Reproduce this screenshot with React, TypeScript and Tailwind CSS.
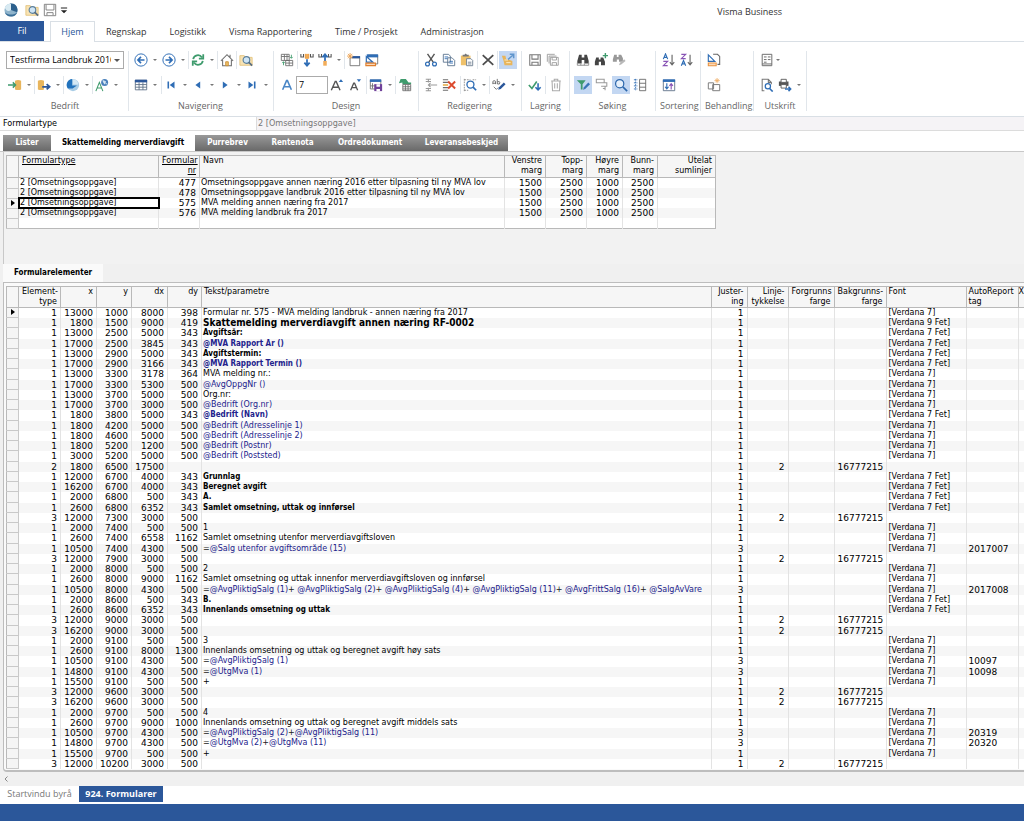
import type { ReactNode } from "react";
import clsx from "clsx";

const BLUE = "#2f6db5";
const NAVY = "#2b579a";
const GRAY = "#6e6e6e";
const GREEN = "#3f9b6d";
const TAN = "#e8b55c";

const icons: Record<string, ReactNode> = {
  logo: (
    <>
      <circle cx="8" cy="8" r="7.500" fill="#8fb4cc" />
      <path d="M7 .5a7.500 7.500 0 0 1 8 10L8 8z" fill="#2b5f8c" />
      <path d="M1 5c2-4 5-4.400 7-4v7c-3 2-6 1-7-3z" fill="#d8eaf2" />
      <path d="M1 10.500c3 3.500 11 3.500 14 0-1 6-12 7-14 0z" fill="#3b6f98" />
    </>
  ),
  folderSearch: (
    <>
      <path d="M1 3h5l1 2h8v9H1z" fill="#f8e3b4" stroke="#e3c27c" />
      <circle cx="8.500" cy="8" r="3.800" fill="#cfe5f5" stroke="#5a7f9c" strokeWidth="1.300" />
      <path d="M11 10.500l4 4" stroke="#5a6f82" strokeWidth="2" />
    </>
  ),
  save: (
    <path d="M2 2h12v12H2zM4.500 2v5h7V2M4.500 14v-3.500h7V14" fill="none" stroke="#777" strokeWidth="1.200" />
  ),
  disk: <path d="M1.500 1.500h13v13h-13zM3.500 2v6h9V2M4.500 14v-3h7v3" fill="none" stroke="#777" />,
  saveAll: (
    <path d="M5 5h9v9H5zM7 5v3h5V5M7 14v-3h5v3M3.500 12V3.500H12M1.500 10V1.500H10" fill="none" stroke="#999" />
  ),
  customize: <path d="M3 4h10v1.500H3zM3 8.500h10L8 13z" fill="#222" />,
  dbIn: (
    <>
      <path d="M8 3q3.500-1.500 7 0v10q-3.500 1.500-7 0z" fill={TAN} />
      <path d="M0 8h8M5.500 5l3 3-3 3" fill="none" stroke={GREEN} strokeWidth="1.800" />
    </>
  ),
  dbOut: (
    <>
      <path d="M1 3q3.500-1.500 7 0v10q-3.500 1.500-7 0z" fill={TAN} />
      <path d="M6 10h8M11 7l3.500 3-3.500 3" fill="none" stroke={NAVY} strokeWidth="2" />
    </>
  ),
  pie: (
    <>
      <circle cx="8" cy="8" r="7" fill="#a9cde6" />
      <path d="M7 1a7 7 0 0 0-5 11h5.500l5-3.500H7z" fill="#2273bd" />
      <path d="M8 1.500a6 6 0 0 1 6 6H8z" fill="#d4e8f4" />
    </>
  ),
  fontGlobe: (
    <>
      <path d="M1 15L5 5l4 10M2.500 11.500h5" fill="none" stroke={GREEN} strokeWidth="1.200" />
      <circle cx="11" cy="5" r="4" fill="#4a80bb" />
      <path d="M9 3l3 1-1 3zM12 6l2 1" fill="#d9e8f4" stroke="#d9e8f4" />
    </>
  ),
  back: (
    <>
      <circle cx="8" cy="8" r="7" fill="none" stroke={BLUE} strokeWidth="1.100" />
      <path d="M12 8H5M8 4.500L4.500 8 8 11.500" fill="none" stroke={BLUE} strokeWidth="1.900" />
    </>
  ),
  forward: (
    <>
      <circle cx="8" cy="8" r="7" fill="none" stroke={BLUE} strokeWidth="1.100" />
      <path d="M4 8h7M8 4.500L11.500 8 8 11.500" fill="none" stroke={BLUE} strokeWidth="1.900" />
    </>
  ),
  refresh: (
    <path
      d="M2.500 7a5.500 5.500 0 0 1 10-2M14 1.500v5H9M13.500 9a5.500 5.500 0 0 1-10 2M2 14.500v-5h5"
      fill="none"
      stroke={GREEN}
      strokeWidth="2"
    />
  ),
  home: (
    <>
      <path d="M3 8v6.500h10V8M1 9l7-7 7 7M11.500 5V2" fill="none" stroke={GRAY} strokeWidth="1.200" />
      <path d="M6.500 10h3v4.500h-3z" fill="#efc16a" stroke="#c88d34" />
    </>
  ),
  table: (
    <>
      <path d="M1.500 2.500h13v11h-13zM1.500 7.500h13M1.500 10.500h13M5.800 5v8.500M10.200 5v8.500" fill="none" stroke="#5c6f86" />
      <path d="M1 2h14v3H1z" fill={NAVY} />
    </>
  ),
  first: <path d="M4 4v8h1.800V4zM12 4v8L6.500 8z" fill={BLUE} />,
  prev: <path d="M10.500 4v8L5 8z" fill={BLUE} />,
  next: <path d="M5.500 4v8L11 8z" fill={BLUE} />,
  last: <path d="M10.200 4v8H12V4zM4 4v8l5.500-4z" fill={BLUE} />,
  gridSwap: (
    <>
      <path d="M1.500 1.500h9v7h-9zM1.500 4h9M5 1.500v7M8 1.500v7M6.500 8.500h8v6h-8zM6.500 11.500h8M10.500 8.500v6" fill="none" stroke={GRAY} />
      <path d="M13 2v4M11.500 4.500L13 6l1.500-1.500M4 14v-4M2.500 11.500L4 10l1.500 1.500" fill="none" stroke={GREEN} />
    </>
  ),
  moveDown: (
    <>
      <path d="M1 1v3.500h3V1M12 1v3.500h3V1" fill="none" stroke="#555" strokeWidth="1.200" />
      <path d="M6 1v5h4V1" fill="#f2ad59" stroke="#e79535" />
      <path d="M8 7v7M5 11l3 3.500 3-3.500" fill="none" stroke={BLUE} strokeWidth="2" />
    </>
  ),
  moveUp: (
    <>
      <path d="M1 1v3.500h3V1M12 1v3.500h3V1" fill="none" stroke="#555" strokeWidth="1.200" />
      <path d="M8 9V2M5 5l3-3.500L11 5" fill="none" stroke={BLUE} strokeWidth="2" />
      <path d="M6 9h4v5.500H6z" fill="#f2ad59" />
    </>
  ),
  newWindow: (
    <>
      <path d="M3.500 5.500h11v9h-11z" fill="none" stroke={GRAY} />
      <path d="M6 3.500h9V6H6z" fill={NAVY} />
      <path d="M3.500 0v7M0 3.500h7M1 1l5 5M6 1L1 6" stroke="#eda251" />
    </>
  ),
  designWindow: (
    <>
      <path d="M3.500 2.500h11v10h-11z" fill="none" stroke={GRAY} />
      <path d="M2 1.500h13V5H2z" fill={BLUE} />
      <path d="M1.500 4v6.500H9z" fill="#fff" stroke={BLUE} strokeWidth="1.400" />
      <path d="M1 11.500h11v3H1z" fill="#fbd9b8" stroke="#e07f2e" strokeWidth="1.300" />
    </>
  ),
  letter: <path d="M3 13.500L7.500 3h1L13 13.500M4.500 10h7" fill="none" stroke="#4a86c6" strokeWidth="1.800" />,
  grow: (
    <>
      <path d="M1.500 14L6 4h1l4.500 10M3.500 10.500h6" fill="none" stroke="#555" strokeWidth="1.600" />
      <path d="M10 4.500l2.500-3 2.500 3z" fill={BLUE} />
    </>
  ),
  shrink: (
    <>
      <path d="M3 14l3.500-8h1L11 14M4.500 11h5" fill="none" stroke="#555" strokeWidth="1.500" />
      <path d="M10 1.500h5l-2.500 3z" fill={BLUE} />
    </>
  ),
  saveTable: (
    <>
      <path d="M1.500 2.500h12v10h-12zM4 6v6M1.500 9h8" fill="none" stroke={GRAY} />
      <path d="M1 1.500h13V4.500H1z" fill={BLUE} />
      <path d="M6 7h9v8H6z" fill="#70429a" />
      <path d="M8.500 7h4v3h-4zM8.500 12.500h4V15h-4z" fill="#fff" />
    </>
  ),
  stepTable: (
    <>
      <path d="M3 1h6l3 4h3v2H5V5L1 6z" fill={GREEN} />
      <path d="M5.500 7.500h9v7h-9zM5.500 10h9M5.500 12.500h9M8.500 7.500v7M11.500 7.500v7" fill="none" stroke={GRAY} />
    </>
  ),
  cut: (
    <>
      <path d="M4 1l6.500 9.500M12 1L5.500 10.500" stroke="#555" strokeWidth="1.600" />
      <circle cx="4" cy="12.500" r="2.200" fill="none" stroke={BLUE} strokeWidth="1.400" />
      <circle cx="12" cy="12.500" r="2.200" fill="none" stroke={BLUE} strokeWidth="1.400" />
    </>
  ),
  copy: (
    <>
      <path d="M1.500 1.500h6l2 2v7h-8zM6.500 5.500h5l3 3v6h-8z" fill="#fff" stroke="#58718d" />
      <path d="M3 4.500h4M3 6.500h3M8.500 9.500h4M8.500 11.500h4" stroke={BLUE} />
    </>
  ),
  paste: (
    <>
      <path d="M1 3h11v11H1z" fill="#efc16a" />
      <path d="M3 4h7V2H8L6.500.5 5 2H3z" fill="#777" />
      <path d="M7.500 6.500h5l2 2v6h-7zM9 10.500h4M9 12.500h4" fill="#fff" stroke="#6a7b8e" />
    </>
  ),
  remove: <path d="M2 2.500l12 11M14 2.500l-12 11" stroke="#4c4c4c" strokeWidth="2" />,
  brush: (
    <>
      <path d="M1 3h4l1 4 4 1 3 1v5H4l-1-5z" fill={TAN} />
      <path d="M8 7.500l5.500-5M10 1.500h4.500V6" fill="none" stroke="#5f95cd" strokeWidth="1.700" />
      <path d="M4 8h4M6 11h5" stroke="#fff2d0" />
    </>
  ),
  insertRow: (
    <path d="M2 1.500h6M2 4h6M5 1v4M15 8H5M7.500 5.500L5 8l2.500 2.500M2 12h6M2 14.500h6M5 11v4" fill="none" stroke="#999" strokeWidth="1.200" />
  ),
  deleteRow: (
    <>
      <path d="M1 2h6M1 5h6M1 11h6M1 14h6" stroke={GRAY} strokeWidth="1.200" />
      <path d="M1 8h6" stroke={TAN} strokeWidth="2" />
      <path d="M7 4l8 8M15 4l-8 8" stroke="#dc4a2d" strokeWidth="2.200" />
    </>
  ),
  findRow: (
    <>
      <path d="M1.500 1v14M1.500 2h7M11 2h4M1.500 14H6" fill="none" stroke="#8a8a8a" strokeDasharray="2 1" />
      <circle cx="8.500" cy="7.500" r="4" fill="#fff" stroke={BLUE} strokeWidth="1.500" />
      <path d="M11.500 10.500L15 14" stroke={BLUE} strokeWidth="2" />
    </>
  ),
  replace: (
    <>
      <path d="M1 7V4.500q0-1.500 1.500-1.500T4 4.500V7M1 6h3M6 1v6M6 4.500q3-1.500 3 1t-3 1" fill="none" stroke="#666" />
      <path d="M2 10l3 3 2-2" fill="none" stroke={GRAY} />
      <path d="M7 13.500l1-3L13.500 5l2 2L10 12.500z" fill={NAVY} />
    </>
  ),
  accept: (
    <>
      <path d="M1 8l3.500 4L10 4" fill="none" stroke={GREEN} strokeWidth="1.900" />
      <path d="M11.500 6v7M8.500 10.500l3 3 3-3" fill="none" stroke={BLUE} strokeWidth="1.800" />
    </>
  ),
  trash: (
    <path d="M2.500 3.500h11M6 3.500v-2h4v2M3.500 3.500l.5 11h8l.5-11M6.500 6v6M9.500 6v6" fill="none" stroke="#aaa" strokeWidth="1.200" />
  ),
  binoculars: (
    <>
      <path d="M3.500 2h3v3h3V2h3l2 7v3H9.500V8h-3v4H1.500V9z" fill="#454545" />
      <path d="M1.500 11v3h13v-3M5.500 12v2M9.500 12v2" fill="none" stroke="#888" />
    </>
  ),
  binocularsAdd: (
    <>
      <path d="M2.500 5h3v2.500h2V5h3l2 5v4H8v-4H5.500v4H1v-4z" fill="#454545" />
      <path d="M13 0v6M10 3h6" stroke={GREEN} strokeWidth="1.600" />
    </>
  ),
  binocularsEdit: (
    <>
      <path d="M2.500 2h3v2.500h2V2h3l2 4v4H8V7.500H5.500V10H1V7z" fill="#999" />
      <path d="M8 14l1-3 5-4 1.500 2-5 4z" fill="#b9b9b9" />
    </>
  ),
  filterEdit: (
    <>
      <path d="M1 2.500h10L7.500 7v6h-2V7z" fill={GREEN} />
      <path d="M8 13.500l1-3L14 5l2 2-5.500 5.500z" fill="#3975b6" />
    </>
  ),
  filterLayers: (
    <path d="M1.500 1.500h9v4h-9zM4.500 5.500h9v4H9M7 9.500h6.500M9 12h3M11.500 10v4" fill="none" stroke="#9a9a9a" strokeWidth="1.200" />
  ),
  search: (
    <>
      <circle cx="6.500" cy="6.500" r="4.700" fill="#e6f0fb" stroke="#2c67ac" strokeWidth="1.400" />
      <path d="M10 10l5 5" stroke="#2c67ac" strokeWidth="2" />
    </>
  ),
  listPanel: (
    <>
      <path d="M1 2h4M1 5.500h4M1 9h4M1 12.500h4M3 1v13" stroke={BLUE} strokeDasharray="2 1" />
      <path d="M7.500 1.500h7v13h-7zM7.500 6h7M7.500 10.500h7" fill="none" stroke="#666" />
    </>
  ),
  sortAsc: (
    <>
      <path d="M1.500 7L4 1l2.500 6M2.500 5h3" fill="none" stroke={BLUE} strokeWidth="1.300" />
      <path d="M1.500 9.500h5l-5 5h5" fill="none" stroke="#8954b5" strokeWidth="1.300" />
      <path d="M11.500 2v11M9 10.500l2.500 3 2.500-3" fill="none" stroke="#666" strokeWidth="1.300" />
    </>
  ),
  sortDesc: (
    <>
      <path d="M1.500 1.500h5l-5 5h5" fill="none" stroke="#8954b5" strokeWidth="1.300" />
      <path d="M1.500 14.500L4 8.500l2.500 6M2.500 12.500h3" fill="none" stroke={BLUE} strokeWidth="1.300" />
      <path d="M11.500 2v11M9 10.500l2.500 3 2.500-3" fill="none" stroke="#666" strokeWidth="1.300" />
    </>
  ),
  sortWindow: (
    <>
      <path d="M1.500 2.500h13v12h-13z" fill="none" stroke="#5c6f86" />
      <path d="M1 1.500h14v3H1z" fill={BLUE} />
      <path d="M5.500 6v6M3.500 10l2 2.500 2-2.500" fill="none" stroke={BLUE} strokeWidth="1.300" />
      <path d="M10.500 13V7M8.500 9l2-2.500 2 2.500" fill="none" stroke="#8954b5" strokeWidth="1.300" />
    </>
  ),
  designPage: (
    <>
      <path d="M7 1.500h5l2.500 2.500v9H12" fill="none" stroke="#666" strokeWidth="1.200" />
      <path d="M1.500 2v7.500H9z" fill="#fff" stroke={BLUE} strokeWidth="1.300" />
      <path d="M1.500 11.500h9v3h-9z" fill="#fbd9b8" stroke="#e9913c" strokeWidth="1.200" />
    </>
  ),
  newForm: (
    <>
      <path d="M1.500 5.500h6v7h-6zM6.500 7.500h8v7h-8z" fill="#fff" stroke="#7a7a7a" strokeWidth="1.100" />
      <path d="M11.500 0v6M8.500 3h6M9.500 1l4 4M13.500 1l-4 4" stroke="#f0b06a" />
    </>
  ),
  report: (
    <path d="M2.500 1.500h11v13h-11zM4.500 4.500h3M9 4.500h3M4.500 7.500h3M9 7.500h3M4.500 10.500h3M2.500 12.500h11" fill="none" stroke="#6a6a6a" strokeWidth="1.100" />
  ),
  preview: (
    <>
      <path d="M5 14.500H2.500v-13h7L13 5v2M9.500 1.500V5H13" fill="none" stroke="#777" strokeWidth="1.200" />
      <circle cx="9" cy="9.500" r="3" fill="#fff" stroke={BLUE} strokeWidth="1.400" />
      <path d="M11 12l3.500 3.500" stroke={BLUE} strokeWidth="1.800" />
    </>
  ),
  print: (
    <>
      <path d="M1 4h11v5H1z" fill="#555" />
      <path d="M3.500 1.500h6V5h-6zM3.500 7.500h6v4h-6z" fill="#fff" stroke="#555" />
      <path d="M8 12.500h6M12 10l2.500 2.500L12 15" fill="none" stroke={BLUE} strokeWidth="1.700" />
    </>
  ),
};

function Icon({ name, className }: { name: string; className?: string }) {
  return (
    <svg viewBox="0 0 16 16" aria-hidden="true" className={clsx("shrink-0", className || "w-3.5 h-3.5")}>
      {icons[name]}
    </svg>
  );
}

function Tool({ name, active }: { name: string; active?: boolean }) {
  return (
    <button
      type="button"
      aria-label={name}
      className={clsx("w-[18px] h-[18px] shrink-0 flex items-center justify-center", active && "bg-[#c3d7f2]")}
    >
      <Icon name={name} />
    </button>
  );
}

function Drop({ className }: { className?: string }) {
  return (
    <button type="button" aria-label="Flere valg" className={clsx("flex items-center justify-center shrink-0", className || "w-[10px]")}>
      <svg viewBox="0 0 4 2" className="w-1 h-0.5">
        <path d="M0 0h4L2 2z" fill="#777" />
      </svg>
    </button>
  );
}

function Sep({ className }: { className?: string }) {
  return <span className={clsx("w-px h-[18px] bg-[#e1e6eb] shrink-0", className)} />;
}

function Group({ label, className, top, bottom }: { label: string; className: string; top: ReactNode; bottom: ReactNode }) {
  return (
    <section aria-label={label} className={clsx("shrink-0 border-r border-[#e1e6eb] flex flex-col gap-[7px]", className)}>
      <div className="flex h-[18px]">{top}</div>
      <div className="flex h-[18px]">{bottom}</div>
      <div className="text-center text-[#666] leading-[10px] pr-1">{label}</div>
    </section>
  );
}

function Ribbon() {
  return (
    <div className="flex pt-[9px] pb-[5px] border-t border-b border-[#d9dfe5] bg-white overflow-hidden">
      <Group
        label="Bedrift"
        className="w-[129px] pl-1.5"
        top={
          <div className="relative w-[118px] h-[18px]">
            <select
              aria-label="Firma"
              className="appearance-none w-full h-full border border-[#ababab] bg-white pl-[3px] pr-3 text-black outline-none"
            >
              <option>Testfirma Landbruk 2016</option>
            </select>
            <svg viewBox="0 0 6 3" className="absolute right-1 top-2 w-1.5 h-[3px] pointer-events-none">
              <path d="M0 0h6L3 3z" fill="#555" />
            </svg>
          </div>
        }
        bottom={
          <>
            <Tool name="dbIn" /><Drop /><Sep />
            <Tool name="dbOut" /><Drop /><Sep />
            <Tool name="pie" /><Drop /><Sep />
            <Tool name="fontGlobe" /><Drop />
          </>
        }
      />
      <Group
        label="Navigering"
        className="w-[145px] pl-[3px]"
        top={
          <>
            <Tool name="back" /><Drop />
            <Tool name="forward" /><Drop /><Sep />
            <Tool name="refresh" /><Drop /><Sep />
            <Tool name="home" /><Sep />
            <Tool name="folderSearch" />
          </>
        }
        bottom={
          <>
            <Tool name="table" /><Drop /><Sep className="ml-px" />
            <Tool name="first" /><Drop className="w-[9px]" />
            <Tool name="prev" /><Drop className="w-[9px]" />
            <Tool name="next" /><Drop className="w-[9px]" />
            <Tool name="last" /><Drop className="w-[9px]" />
          </>
        }
      />
      <Group
        label="Design"
        className="w-[145px] pl-1"
        top={
          <>
            <Tool name="gridSwap" /><Sep className="ml-px" />
            <Tool name="moveDown" /><Tool name="moveUp" /><Drop /><Sep />
            <Tool name="newWindow" /><Tool name="designWindow" />
          </>
        }
        bottom={
          <>
            <Tool name="letter" />
            <input aria-label="Skriftstørrelse" defaultValue="7" className="w-8 border border-[#ababab] bg-white px-0.5 text-black outline-none" />
            <Tool name="grow" /><Tool name="shrink" /><Sep className="ml-0.5" />
            <Tool name="saveTable" /><Drop /><Sep />
            <Tool name="stepTable" />
          </>
        }
      />
      <Group
        label="Redigering"
        className="w-[103px] pl-[3px]"
        top={
          <>
            <Tool name="cut" /><Tool name="copy" /><Tool name="paste" /><Sep className="mx-px" />
            <Tool name="remove" /><Sep className="mr-px" />
            <Tool name="brush" active />
          </>
        }
        bottom={
          <>
            <Tool name="insertRow" /><Tool name="deleteRow" /><Sep className="ml-0.5" />
            <Tool name="findRow" /><Drop /><Sep />
            <Tool name="replace" /><Drop />
          </>
        }
      />
      <Group
        label="Lagring"
        className="w-12 pl-1"
        top={<><Tool name="save" /><Tool name="saveAll" /></>}
        bottom={<><Tool name="accept" /><Sep className="mx-px" /><Tool name="trash" /></>}
      />
      <Group
        label="Søking"
        className="w-[86px] pl-1"
        top={<><Tool name="binoculars" /><Tool name="binocularsAdd" /><Tool name="binocularsEdit" /></>}
        bottom={
          <div className="flex gap-px">
            <Tool name="filterEdit" active /><Tool name="filterLayers" />
            <Tool name="search" active /><Tool name="listPanel" />
          </div>
        }
      />
      <Group
        label="Sortering"
        className="w-[45px] pl-1"
        top={<><Tool name="sortAsc" /><Tool name="sortDesc" /></>}
        bottom={<Tool name="sortWindow" />}
      />
      <Group label="Behandling" className="w-[53px] pl-1" top={<Tool name="designPage" />} bottom={<Tool name="newForm" />} />
      <Group
        label="Utskrift"
        className="w-[53px] pl-1"
        top={<><Tool name="report" /><Drop className="w-1" /></>}
        bottom={<><Tool name="preview" /><Tool name="print" /><Drop /></>}
      />
    </div>
  );
}

const formTabs = ["Lister", "Skattemelding merverdiavgift", "Purrebrev", "Rentenota", "Ordredokument", "Leveransebeskjed"];
const formTabWidths = ["w-12", "w-[144px]", "w-[65px]", "w-[65px]", "w-[90px]", "w-[93px]"];

const forms = [
  ["477", "Omsetningsoppgave annen næring 2016 etter tilpasning til ny MVA lov"],
  ["478", "Omsetningsoppgave landbruk 2016 etter tilpasning til ny MVA lov"],
  ["575", "MVA melding annen næring fra 2017"],
  ["576", "MVA melding landbruk fra 2017"],
];

const condensed = "font-['DejaVu_Sans_Condensed','Open_Sans',sans-serif]";
const cell = "border-r border-[#e3e3e3] overflow-hidden whitespace-nowrap";
const num = "border-r border-[#e3e3e3] overflow-hidden whitespace-nowrap px-[3px] text-right text-[9px]";
const head = "border-r border-b border-[#b9b9b9] px-[3px] align-top font-normal overflow-hidden";
const marker = "border-r border-b border-[#c9c9c9] bg-[#f5f5f5]";

function RowArrow() {
  return (
    <svg viewBox="0 0 4 6" className="w-1 h-1.5 ml-1">
      <path d="M0 0l4 3-4 3z" fill="#000" />
    </svg>
  );
}

function FormTable() {
  return (
    <table className="table-fixed border-collapse w-[710px] border border-[#b9b9b9] bg-white leading-[10px] text-black">
      <colgroup>
        <col className="w-3" />
        <col className="w-[140px]" />
        <col className="w-[41px]" />
        <col />
        <col className="w-[41px]" />
        <col className="w-[41px]" />
        <col className="w-9" />
        <col className="w-[35px]" />
        <col className="w-[58px]" />
      </colgroup>
      <thead className="bg-[#f6f6f6]">
        <tr className="h-[22px]">
          <th className={head} />
          <th className={clsx(head, "text-left underline")}>Formulartype</th>
          <th className={clsx(head, "text-right underline")}>Formular nr</th>
          <th className={clsx(head, "text-left")}>Navn</th>
          <th className={clsx(head, "text-right")}>Venstre marg</th>
          <th className={clsx(head, "text-right")}>Topp-<br />marg</th>
          <th className={clsx(head, "text-right")}>Høyre marg</th>
          <th className={clsx(head, "text-right")}>Bunn-<br />marg</th>
          <th className={clsx(head, "text-right")}>Utelat sumlinjer</th>
        </tr>
      </thead>
      <tbody>
        {forms.map(([nr, navn]) => (
          <tr key={nr} className="h-[10px] even:bg-[#f6f6f6]">
            <td className={marker}>{nr === "575" && <RowArrow />}</td>
            <td className={clsx(cell, "px-px", nr === "575" && "outline-2 -outline-offset-1 outline-black")}>2 [Omsetningsoppgave]</td>
            <td className={num}>{nr}</td>
            <td className={clsx(cell, "px-px")}>{navn}</td>
            <td className={num}>1500</td>
            <td className={num}>2500</td>
            <td className={num}>1000</td>
            <td className={num}>2500</td>
            <td />
          </tr>
        ))}
        <tr className="h-[10px]">
          <td className={marker} />
          <td className={cell} />
          <td className={cell} />
          <td className={cell} />
          <td className={cell} />
          <td className={cell} />
          <td className={cell} />
          <td className={cell} />
          <td />
        </tr>
      </tbody>
    </table>
  );
}

type Element = [type: number, x: number, y: number, dx: number, dy: number | "", text: string, font: string, just?: number, tag?: string];

const V7 = "[Verdana 7]";
const V7B = "[Verdana 7 Fet]";
const V9B = "[Verdana 9 Fet]";

const elements: Element[] = [
  [1, 13000, 1000, 8000, 398, "Formular nr. 575 - MVA melding landbruk - annen næring fra 2017", V7],
  [1, 1800, 1500, 9000, 419, "Skattemelding merverdiavgift annen næring RF-0002", V9B],
  [1, 13000, 2500, 5000, 343, "Avgiftsår:", V7B],
  [1, 17000, 2500, 3845, 343, "@MVA Rapport År ()", V7B],
  [1, 13000, 2900, 5000, 343, "Avgiftstermin:", V7B],
  [1, 17000, 2900, 3166, 343, "@MVA Rapport Termin ()", V7B],
  [1, 13000, 3300, 3178, 364, "MVA melding nr.:", V7],
  [1, 17000, 3300, 5300, 500, "@AvgOppgNr ()", V7],
  [1, 13000, 3700, 5000, 500, "Org.nr:", V7],
  [1, 17000, 3700, 3000, 500, "@Bedrift (Org.nr)", V7],
  [1, 1800, 3800, 5000, 343, "@Bedrift (Navn)", V7B],
  [1, 1800, 4200, 5000, 500, "@Bedrift (Adresselinje 1)", V7],
  [1, 1800, 4600, 5000, 500, "@Bedrift (Adresselinje 2)", V7],
  [1, 1800, 5200, 1200, 500, "@Bedrift (Postnr)", V7],
  [1, 3000, 5200, 5000, 500, "@Bedrift (Poststed)", V7],
  [2, 1800, 6500, 17500, "", "", ""],
  [1, 12000, 6700, 4000, 343, "Grunnlag", V7B],
  [1, 16200, 6700, 4000, 343, "Beregnet avgift", V7B],
  [1, 2000, 6800, 500, 343, "A.", V7B],
  [1, 2600, 6800, 6352, 343, "Samlet omsetning, uttak og innførsel", V7B],
  [3, 12000, 7300, 3000, 500, "", ""],
  [1, 2000, 7400, 500, 500, "1", V7],
  [1, 2600, 7400, 6558, 1162, "Samlet omsetning utenfor merverdiavgiftsloven", V7],
  [1, 10500, 7400, 4300, 500, "=@Salg utenfor avgiftsområde (15)", V7, 3, "2017007"],
  [3, 12000, 7900, 3000, 500, "", ""],
  [1, 2000, 8000, 500, 500, "2", V7],
  [1, 2600, 8000, 9000, 1162, "Samlet omsetning og uttak innenfor merverdiavgiftsloven og innførsel", V7],
  [
    1, 10500, 8000, 4300, 500,
    "=@AvgPliktigSalg (1)+ @AvgPliktigSalg (2)+ @AvgPliktigSalg (4)+ @AvgPliktigSalg (11)+ @AvgFrittSalg (16)+ @SalgAvVare",
    V7, 3, "2017008",
  ],
  [1, 2000, 8600, 500, 343, "B.", V7B],
  [1, 2600, 8600, 6352, 343, "Innenlands omsetning og uttak", V7B],
  [3, 12000, 9000, 3000, 500, "", ""],
  [3, 16200, 9000, 3000, 500, "", ""],
  [1, 2000, 9100, 500, 500, "3", V7],
  [1, 2600, 9100, 8000, 1300, "Innenlands omsetning og uttak og beregnet avgift høy sats", V7],
  [1, 10500, 9100, 4300, 500, "=@AvgPliktigSalg (1)", V7, 3, "10097"],
  [1, 14800, 9100, 4300, 500, "=@UtgMva (1)", V7, 3, "10098"],
  [1, 15500, 9100, 500, 500, "+", V7],
  [3, 12000, 9600, 3000, 500, "", ""],
  [3, 16200, 9600, 3000, 500, "", ""],
  [1, 2000, 9700, 500, 500, "4", V7],
  [1, 2600, 9700, 9000, 1000, "Innenlands omsetning og uttak og beregnet avgift middels sats", V7],
  [1, 10500, 9700, 4300, 500, "=@AvgPliktigSalg (2)+@AvgPliktigSalg (11)", V7, 3, "20319"],
  [1, 14800, 9700, 4300, 500, "=@UtgMva (2)+@UtgMva (11)", V7, 3, "20320"],
  [1, 15500, 9700, 500, 500, "+", V7],
  [3, 12000, 10200, 3000, 500, "", ""],
];

const elementHeads: [string, string, string][] = [
  ["", "w-3 px-[3px]", "text-left"],
  ["Element- type", "w-[42px] px-[3px]", "text-right"],
  ["x", "w-9 px-[3px]", "text-right"],
  ["y", "w-[35px] px-[3px]", "text-right"],
  ["dx", "w-9 px-[3px]", "text-right"],
  ["dy", "w-[34px] px-[3px]", "text-right"],
  ["Tekst/parametre", "w-auto px-0.5", "text-left"],
  ["Juster- ing", "w-9 px-[3px]", "text-right"],
  ["Linje- tykkelse", "w-[41px] px-[3px]", "text-right"],
  ["Forgrunns farge", "w-[46px] px-[3px]", "text-right"],
  ["Bakgrunns- farge", "w-[52px] px-[3px]", "text-right"],
  ["Font", "w-20 px-0.5", "text-left"],
  ["AutoReport tag", "w-[52px] px-0.5", "text-left"],
  ["X", "w-1.5 px-0", "text-left"],
];

// operators stay dark, the @references are blue
function Formula({ text }: { text: string }) {
  return text.split(/([=+])/).map((part, i) => (
    <span key={i} className={part === "=" || part === "+" ? "text-[#222]" : "text-[#22228c]"}>{part}</span>
  ));
}

function ElementTable() {
  return (
    <table className="table-fixed border-collapse w-full border-l border-t border-[#b9b9b9] bg-white leading-[10px] text-black">
      <thead className="bg-[#f6f6f6]">
        <tr className="h-[21px]">
          {elementHeads.map(([label, size, align]) => (
            <th
              key={label}
              className={clsx("border-b border-[#b9b9b9] align-top font-normal", label !== "X" && "border-r overflow-hidden", size, align)}
            >
              {label}
            </th>
          ))}
        </tr>
      </thead>
      <tbody className="[&>tr:nth-child(4n+3)]:h-[11px]">
        {elements.map(([type, x, y, dx, dy, text, font, just = 1, tag], i) => (
          <tr key={i} className="h-[10px] even:bg-[#f6f6f6]">
            <td className={marker}>{i === 0 && <RowArrow />}</td>
            {[type, x, y, dx, dy].map((value, n) => (
              <td key={n} className={num}>{value}</td>
            ))}
            <td
              className={clsx(
                cell,
                "px-px",
                font.includes("Fet") && "font-bold",
                font.includes("Fet") && condensed,
                font === V9B && "text-[10px]",
              )}
            >
              {text.includes("@") ? <Formula text={text} /> : text}
            </td>
            <td className={num}>{just}</td>
            <td className={num}>{font ? "" : "2"}</td>
            <td className={cell} />
            <td className={num}>{font ? "" : "16777215"}</td>
            <td className={clsx(cell, "px-0.5")}>{font}</td>
            <td className={clsx(cell, "px-0.5 text-[9px]")}>{tag}</td>
            <td />
          </tr>
        ))}
      </tbody>
    </table>
  );
}

const ribbonTabs = ["Regnskap", "Logistikk", "Visma Rapportering", "Time / Prosjekt", "Administrasjon"];

export default function App() {
  return (
    <div className="min-h-screen flex flex-col bg-white font-['Open_Sans',sans-serif] text-[9px] text-[#333] overflow-hidden">
      <header className="h-[21px] flex items-center pl-0.5 pb-0.5">
        <div className="flex">
          <Tool name="logo" />
          <span className="w-[3px]" />
          <Tool name="folderSearch" />
          <Tool name="disk" />
        </div>
        <Icon name="customize" className="w-2.5 h-2.5" />
        <h1 className="ml-auto mr-[242px] leading-4 pt-1">Visma Business</h1>
      </header>
      <nav className="h-[21px] flex -mb-px relative whitespace-nowrap">
        <button type="button" className="w-11 bg-[#2b579a] text-white mb-px">Fil</button>
        <button type="button" className="w-[45px] ml-1.5 bg-white border border-b-0 border-[#d9dfe5] text-[#2b579a]">Hjem</button>
        <div className="flex gap-[23px] ml-[11px]">
          {ribbonTabs.map((tab) => (
            <button key={tab} type="button">{tab}</button>
          ))}
        </div>
      </nav>
      <Ribbon />

      <main className="flex-1 flex flex-col bg-[#f0f0f0] font-['DejaVu_Sans',sans-serif] text-[8px]">
        <div className={clsx("flex h-[14px] bg-white border-b border-[#dcdcdc] text-[9px]", condensed)}>
          <label htmlFor="formulartype" className="w-64 pl-[3px] leading-[13px] text-black">Formulartype</label>
          <input
            id="formulartype"
            defaultValue="2 [Omsetningsoppgave]"
            className="flex-1 min-w-0 bg-[#f5f3f6] border-l border-[#dcdcdc] px-px text-[#777] outline-none"
          />
        </div>
        <div className={clsx("bg-white pt-1 pl-[3px] flex border-b border-[#c8c8c8]", condensed)}>
          {formTabs.map((tab, i) => (
            <button
              key={tab}
              type="button"
              className={clsx(
                "h-4 shrink-0 font-bold whitespace-nowrap",
                formTabWidths[i],
                i === 1 ? "bg-white text-black" : "bg-linear-to-b from-[#999] to-[#696969] text-white",
              )}
            >
              {tab}
            </button>
          ))}
        </div>
        <div className="ml-[3px] border-l border-[#c8c8c8] pl-0.5 pt-[3px] pb-[35px] bg-[#f2f2f2]">
          <FormTable />
        </div>
        <div className={clsx("ml-[3px] flex", condensed)}>
          <h2 className="w-[100px] h-[18px] leading-[18px] bg-[#fafafa] text-center font-bold text-black">Formularelementer</h2>
        </div>
        <div className="ml-[3px] border-l border-t border-b-2 border-[#bdbdbd] rounded-bl pl-0.5 pt-[3px] pb-px bg-[#fafafa]">
          <ElementTable />
        </div>
        <div className="h-[14px] flex items-center">
          <button type="button" aria-label="Rull til venstre" className="ml-1 w-1 h-2">
            <svg viewBox="0 0 4 6" className="w-1 h-1.5">
              <path d="M3.500.5L1 3l2.500 2.500" fill="none" stroke="#888" />
            </svg>
          </button>
        </div>
      </main>

      <div className="h-[18px] flex items-start bg-white">
        <button type="button" className="h-4 w-[79px] text-[#777]">Startvindu byrå</button>
        <button type="button" className="h-4 w-[84px] bg-[#2b579a] text-white font-bold">924. Formularer</button>
      </div>
      <footer className="h-[18px] bg-[#2b579a] border-b border-[#6b6a5c]" />
    </div>
  );
}
